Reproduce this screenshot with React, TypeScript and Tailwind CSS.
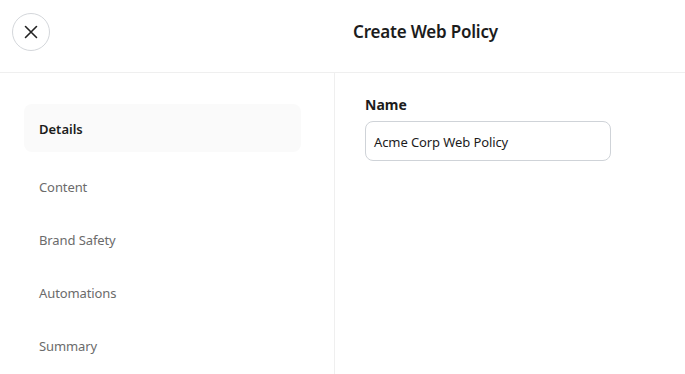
import React from "react";

export default function App() {
  const items = ["Content", "Brand Safety", "Automations", "Summary"];
  return (
    <div
      className="w-[685px] h-[374px] overflow-hidden bg-white text-[#1a1a1a]"
      style={{ fontFamily: '"Noto Sans", sans-serif' }}
    >
      <div className="h-[73px] border-b border-[#efefef] flex items-start">
        <button className="mt-[13px] ml-[12px] w-[38px] h-[38px] rounded-full border border-[#d4d7db] flex items-center justify-center">
          <svg width="16" height="16" viewBox="0 0 16 16" fill="none" stroke="#222" strokeWidth="1.6" strokeLinecap="round">
            <path d="M2.5 2.5l11 11M13.5 2.5l-11 11" />
          </svg>
        </button>
        <div className="ml-[303px] mt-[20px] text-[17px] leading-[24px] font-semibold tracking-[-0.2px] text-[#1c1c1c]">
          Create Web Policy
        </div>
      </div>
      <div className="flex h-[301px]">
        <div className="w-[335px] border-r border-[#efefef] pt-[31px] pl-[24px] pr-[33px]">
          <div className="h-[48px] rounded-lg bg-[#fafafa] flex items-center pl-[15px] pt-[3px] text-[13px] font-semibold text-[#1c1c1c]">
            Details
          </div>
          <div className="mt-[9px]">
            {items.map((t) => (
              <div key={t} className="h-[53px] flex items-center pl-[15px] text-[13px] tracking-[-0.1px] text-[#6b6b6b]">
                {t}
              </div>
            ))}
          </div>
        </div>
        <div className="pl-[30px] pt-[22px]">
          <div className="text-[14px] leading-[20px] font-bold text-[#1c1c1c]">Name</div>
          <div className="mt-[6px] w-[246px] h-[40px] rounded-lg border border-[#cfd3d8] flex items-center px-[8px] pt-[3px] text-[13px] tracking-[-0.1px] text-[#1c1c1c]">
            Acme Corp Web Policy
          </div>
        </div>
      </div>
    </div>
  );
}
